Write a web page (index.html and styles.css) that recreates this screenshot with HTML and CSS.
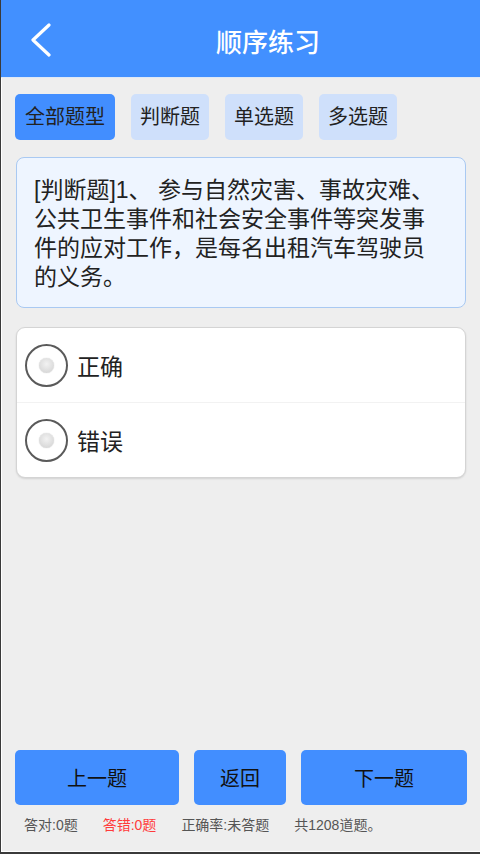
FILE: index.html
```html
<!DOCTYPE html>
<html>
<head>
    <meta charset="utf-8">
    <title>顺序练习</title>
    <link rel="stylesheet" href="styles.css">
</head>
<body>
    <div class="app">
        <div class="header">
            <div class="back">
                <svg width="24" height="36" viewBox="0 0 24 36">
                    <polyline points="18,3 2,18 18,33" fill="none" stroke="#ffffff" stroke-width="3.2" stroke-linecap="round" stroke-linejoin="round"/>
                </svg>
            </div>
            <h1>顺序练习</h1>
        </div>

        <div class="tabs">
            <span class="tab active">全部题型</span>
            <span class="tab">判断题</span>
            <span class="tab">单选题</span>
            <span class="tab">多选题</span>
        </div>

        <div class="question">
            [判断题]1、 参与自然灾害、事故灾难、<br>公共卫生事件和社会安全事件等突发事<br>件的应对工作，是每名出租汽车驾驶员<br>的义务。
        </div>

        <div class="options">
            <label class="option">
                <span class="radio"><span class="dot"></span></span>
                <span>正确</span>
            </label>
            <label class="option">
                <span class="radio"><span class="dot"></span></span>
                <span>错误</span>
            </label>
        </div>

        <div class="spacer"></div>

        <div class="buttons">
            <button>上一题</button>
            <button>返回</button>
            <button>下一题</button>
        </div>
        <div class="stats">
            <span>答对:0题</span>
            <span class="wrong">答错:0题</span>
            <span>正确率:未答题</span>
            <span>共1208道题。</span>
        </div>
    </div>
</body>
</html>
```

FILE: styles.css
```css
body {
    margin: 0;
    padding: 0;
    font-family: "Liberation Sans", "Noto Sans CJK SC", sans-serif;
    background-color: #eeeeee;
}
.app {
    box-sizing: border-box;
    width: 480px;
    height: 854px;
    display: flex;
    flex-direction: column;
    background-color: #eeeeee;
    border-left: 1px solid #3a3a3a;
    border-bottom: 2px solid #3a3a3a;
    box-shadow: inset 1px -1px 0 #ffffff;
}
.header {
    height: 77px;
    flex-shrink: 0;
    background-color: #4290ff;
    display: flex;
    align-items: center;
    border-bottom: 1px solid #dfe9f7;
}
.back {
    width: 24px;
    padding-left: 30px;
    display: flex;
    align-items: center;
    padding-top: 2px;
}
h1 {
    margin: 0 0 0 161px;
    color: #ffffff;
    font-size: 26px;
    font-weight: 500;
    padding-top: 3px;
}
.tabs {
    display: flex;
    gap: 16px;
    padding: 16px 0 0 14px;
}
.tab {
    height: 46px;
    line-height: 46px;
    padding: 0 9px;
    border-radius: 5px;
    background-color: #cfe0fb;
    color: #222222;
    font-size: 20px;
}
.tab.active {
    padding: 0 10px;
    background-color: #428eff;
}
.question {
    margin: 17px 14px 0 15px;
    padding: 18px 16px 15px 17px;
    background-color: #eef5ff;
    border: 1px solid #a9c9f2;
    border-radius: 8px;
    font-size: 23px;
    line-height: 29px;
    color: #222222;
    white-space: nowrap;
}
.options {
    margin: 19px 14px 0 15px;
    background-color: #ffffff;
    border: 1px solid #d4d4d4;
    border-radius: 9px;
    box-shadow: 0 1px 2px rgba(0, 0, 0, 0.12);
}
.option {
    height: 74px;
    display: flex;
    align-items: center;
    gap: 9px;
    padding-left: 8px;
    font-size: 23px;
    color: #222222;
}
.option + .option {
    border-top: 1px solid #f2f2f2;
}
.radio {
    box-sizing: border-box;
    width: 43px;
    height: 43px;
    border: 2px solid #5a5a5a;
    border-radius: 50%;
    display: flex;
    align-items: center;
    justify-content: center;
}
.dot {
    width: 15px;
    height: 15px;
    border-radius: 50%;
    background: radial-gradient(circle at 50% 40%, #f2f2f2, #cfcfcf);
    box-shadow: 0 0 1px #bbbbbb;
}
.spacer {
    flex: 1;
}
.buttons {
    display: grid;
    grid-template-columns: 164px 92px 1fr;
    gap: 15px;
    margin: 0 13px 0 14px;
}
button {
    height: 55px;
    background-color: #428eff;
    color: #111111;
    font-family: "Liberation Sans", "Noto Sans CJK SC", sans-serif;
    font-size: 20px;
    border: none;
    border-radius: 5px;
    padding: 0;
}
.stats {
    display: flex;
    gap: 25px;
    padding: 10px 0 17px 23px;
    font-size: 14px;
    line-height: 20px;
    color: #555555;
}
.stats .wrong {
    color: #ff3b3b;
}
```
